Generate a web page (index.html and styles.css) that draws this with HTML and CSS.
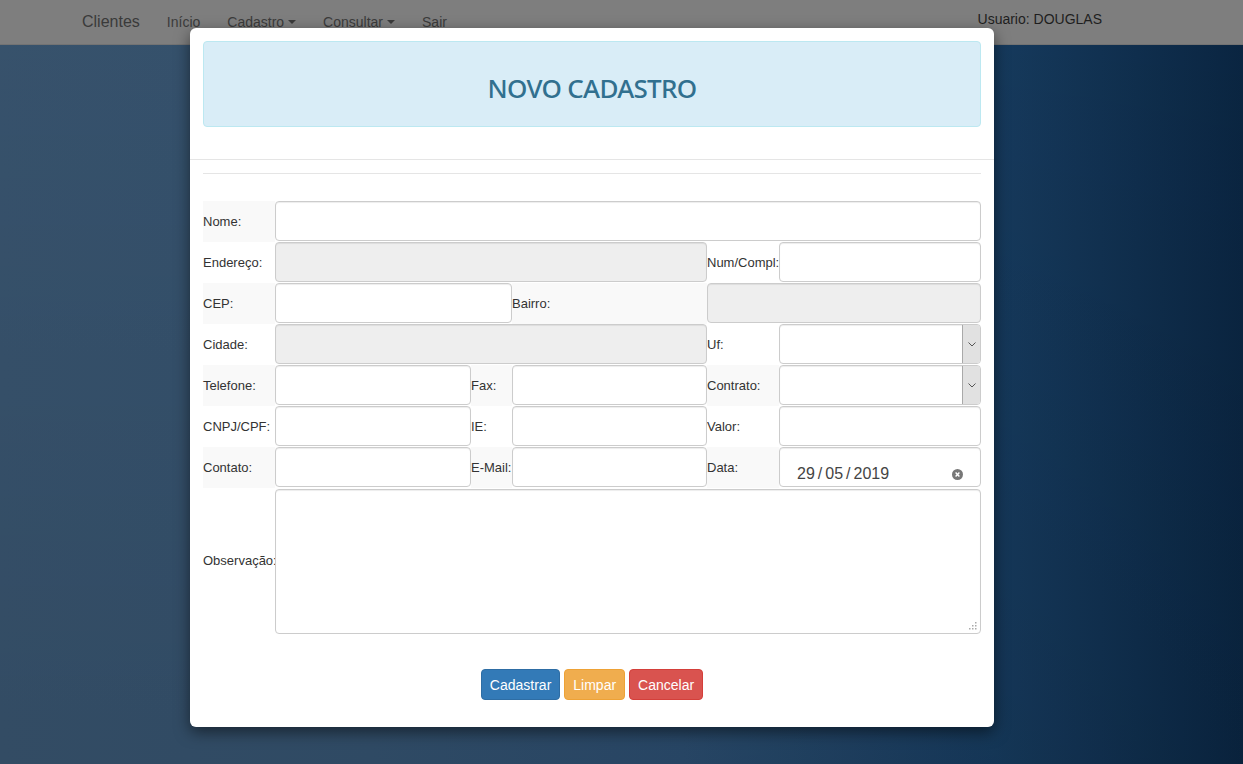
FILE: index.html
```html
<!DOCTYPE html>
<html lang="pt-BR">
<head>
<meta charset="utf-8">
<title>Novo Cadastro</title>
<link rel="stylesheet" href="styles.css">
</head>
<body>
<nav class="navbar">
  <div class="nav-left">
    <span class="brand">Clientes</span>
    <span class="nav-item">Início</span>
    <span class="nav-item">Cadastro <span class="caret"></span></span>
    <span class="nav-item">Consultar <span class="caret"></span></span>
    <span class="nav-item">Sair</span>
  </div>
  <span class="nav-user">Usuario: DOUGLAS</span>
</nav>

<div class="modal">
  <div class="modal-header">
    <div class="alert"><h2 class="title">NOVO CADASTRO</h2></div>
  </div>
  <div class="modal-body">
    <hr class="sep">
    <div class="form-grid">
      <div class="lbl st">Nome:</div>
      <div class="cell span5"><div class="input"></div></div>

      <div class="lbl">Endereço:</div>
      <div class="cell span3"><div class="input disabled"></div></div>
      <div class="lbl">Num/Compl:</div>
      <div class="cell"><div class="input"></div></div>

      <div class="lbl st">CEP:</div>
      <div class="cell span2"><div class="input"></div></div>
      <div class="lbl st">Bairro:</div>
      <div class="cell span2"><div class="input disabled"></div></div>

      <div class="lbl">Cidade:</div>
      <div class="cell span3"><div class="input disabled"></div></div>
      <div class="lbl">Uf:</div>
      <div class="cell"><div class="input select"><span class="sel-btn"><svg width="8" height="5" viewBox="0 0 8 5"><path d="M0.5 0.5 L4 4 L7.5 0.5" fill="none" stroke="#555" stroke-width="1"/></svg></span></div></div>

      <div class="lbl st">Telefone:</div>
      <div class="cell"><div class="input"></div></div>
      <div class="lbl st">Fax:</div>
      <div class="cell"><div class="input"></div></div>
      <div class="lbl st">Contrato:</div>
      <div class="cell"><div class="input select"><span class="sel-btn"><svg width="8" height="5" viewBox="0 0 8 5"><path d="M0.5 0.5 L4 4 L7.5 0.5" fill="none" stroke="#555" stroke-width="1"/></svg></span></div></div>

      <div class="lbl">CNPJ/CPF:</div>
      <div class="cell"><div class="input"></div></div>
      <div class="lbl">IE:</div>
      <div class="cell"><div class="input"></div></div>
      <div class="lbl">Valor:</div>
      <div class="cell"><div class="input"></div></div>

      <div class="lbl st">Contato:</div>
      <div class="cell"><div class="input"></div></div>
      <div class="lbl st">E-Mail:</div>
      <div class="cell"><div class="input"></div></div>
      <div class="lbl st lbl-top">Data:</div>
      <div class="cell"><div class="input date"><span class="date-val">29<span class="sl">/</span>05<span class="sl">/</span>2019</span><span class="clear"><svg width="11" height="11" viewBox="0 0 11 11"><circle cx="5.5" cy="5.5" r="5.5" fill="#777"/><path d="M3.6 3.6 L7.4 7.4 M7.4 3.6 L3.6 7.4" stroke="#fff" stroke-width="1.4"/></svg></span></div></div>

      <div class="lbl obs">Observação:</div>
      <div class="cell span5 tall"><div class="input textarea"><svg class="grip" width="8" height="8" viewBox="0 0 8 8"><rect x="6" y="0" width="1.5" height="1.5" fill="#aaa"/><rect x="3" y="3" width="1.5" height="1.5" fill="#aaa"/><rect x="6" y="3" width="1.5" height="1.5" fill="#aaa"/><rect x="0" y="6" width="1.5" height="1.5" fill="#aaa"/><rect x="3" y="6" width="1.5" height="1.5" fill="#aaa"/><rect x="6" y="6" width="1.5" height="1.5" fill="#aaa"/></svg></div></div>
    </div>
    <div class="actions">
      <button class="btn btn-primary">Cadastrar</button>
      <button class="btn btn-warning">Limpar</button>
      <button class="btn btn-danger">Cancelar</button>
    </div>
  </div>
</div>
</body>
</html>
```

FILE: styles.css
```css
* { box-sizing: border-box; }

html, body {
  margin: 0;
  height: 100%;
}

body {
  font-family: "Liberation Sans", Arial, sans-serif;
  font-size: 13px;
  color: #333;
  background:
    linear-gradient(to bottom, rgba(0,0,0,0) 0%, rgba(0,0,0,0.08) 100%),
    linear-gradient(to right, #37526c 0%, #33506c 30%, #2a4b6c 55%, #163a5d 80%, #0a2541 100%);
  overflow: hidden;
}

.navbar {
  height: 45px;
  background: #7e7e7e;
  border-bottom: 1px solid #737373;
  display: flex;
  align-items: flex-start;
  justify-content: space-between;
  padding: 0 141px 0 82px;
}

.nav-left {
  display: flex;
  align-items: center;
  gap: 27px;
  height: 44px;
}

.brand {
  font-size: 16px;
  color: #3a3a3a;
}

.nav-item {
  font-size: 14px;
  color: #3b3b3b;
  display: flex;
  align-items: center;
}

.caret {
  display: inline-block;
  width: 0;
  height: 0;
  margin-left: 4px;
  border-top: 4px solid #3b3b3b;
  border-left: 4px solid transparent;
  border-right: 4px solid transparent;
}

.nav-user {
  font-size: 14px;
  color: #1e1e1e;
  margin-top: 11px;
}

.modal {
  position: absolute;
  left: 190px;
  top: 28px;
  width: 804px;
  height: 699px;
  background: #fff;
  border-radius: 6px;
  box-shadow: 0 5px 15px rgba(0,0,0,0.5);
}

.modal-header {
  padding: 13px 13px 12px;
  border-bottom: 1px solid #e5e5e5;
}

.alert {
  height: 86px;
  background: #d9edf7;
  border: 1px solid #bce8f1;
  border-radius: 4px;
  margin-bottom: 20px;
  display: flex;
  align-items: center;
  justify-content: center;
  padding-top: 7px;
}

.title {
  margin: 0;
  font-family: "Noto Sans", "Open Sans", sans-serif;
  font-weight: 500;
  font-size: 26px;
  letter-spacing: -0.7px;
  color: #31708f;
}

.modal-body {
  padding: 0 13px 27px;
}

.sep {
  margin: 13px 0 27px;
  border: 0;
  border-top: 1px solid #e5e5e5;
  height: 0;
}

.form-grid {
  display: grid;
  grid-template-columns: 72px 196px 41px 195px 72px 202px;
  grid-template-rows: repeat(7, 41px) 146px;
}

.lbl {
  display: flex;
  align-items: center;
  white-space: nowrap;
  font-size: 13px;
  color: #333;
  padding-bottom: 1px;
}

.lbl.st { background: #f9f9f9; }
.lbl-top { align-items: flex-start; padding-top: 13px; }

.cell { display: flex; }
.span2 { grid-column: span 2; }
.span3 { grid-column: span 3; }
.span5 { grid-column: span 5; }

.input {
  flex: 1;
  height: 40px;
  border: 1px solid #ccc;
  border-radius: 4px;
  background: #fff;
  box-shadow: inset 0 1px 1px rgba(0,0,0,0.075);
  position: relative;
}

.input.disabled { background: #eee; }

.select {
  display: flex;
  justify-content: flex-end;
  padding: 0;
}

.sel-btn {
  width: 18px;
  height: 100%;
  background: #e1e1e1;
  border-left: 1px solid #a9a9a9;
  border-radius: 0 3px 3px 0;
  display: flex;
  align-items: center;
  justify-content: center;
}

.date {
  display: flex;
  align-items: center;
  justify-content: space-between;
  padding: 14px 16px 0 17px;
}

.date-val {
  font-size: 16px;
  color: #444;
}

.sl { margin: 0 3px; }

.clear { display: flex; margin-right: 1px; }

.tall .input.textarea { height: 145px; margin-top: 1px; }

.grip {
  position: absolute;
  right: 3px;
  bottom: 3px;
}

.actions {
  display: flex;
  justify-content: center;
  gap: 4px;
  margin-top: 35px;
}

.btn {
  font-family: "Liberation Sans", Arial, sans-serif;
  font-size: 14px;
  height: 31px;
  padding: 0 8px;
  border-radius: 4px;
  border: 1px solid transparent;
  color: #fff;
}

.btn-primary { background: #337ab7; border-color: #2e6da4; }
.btn-warning { background: #f0ad4e; border-color: #eea236; }
.btn-danger { background: #d9534f; border-color: #d43f3a; }
```
